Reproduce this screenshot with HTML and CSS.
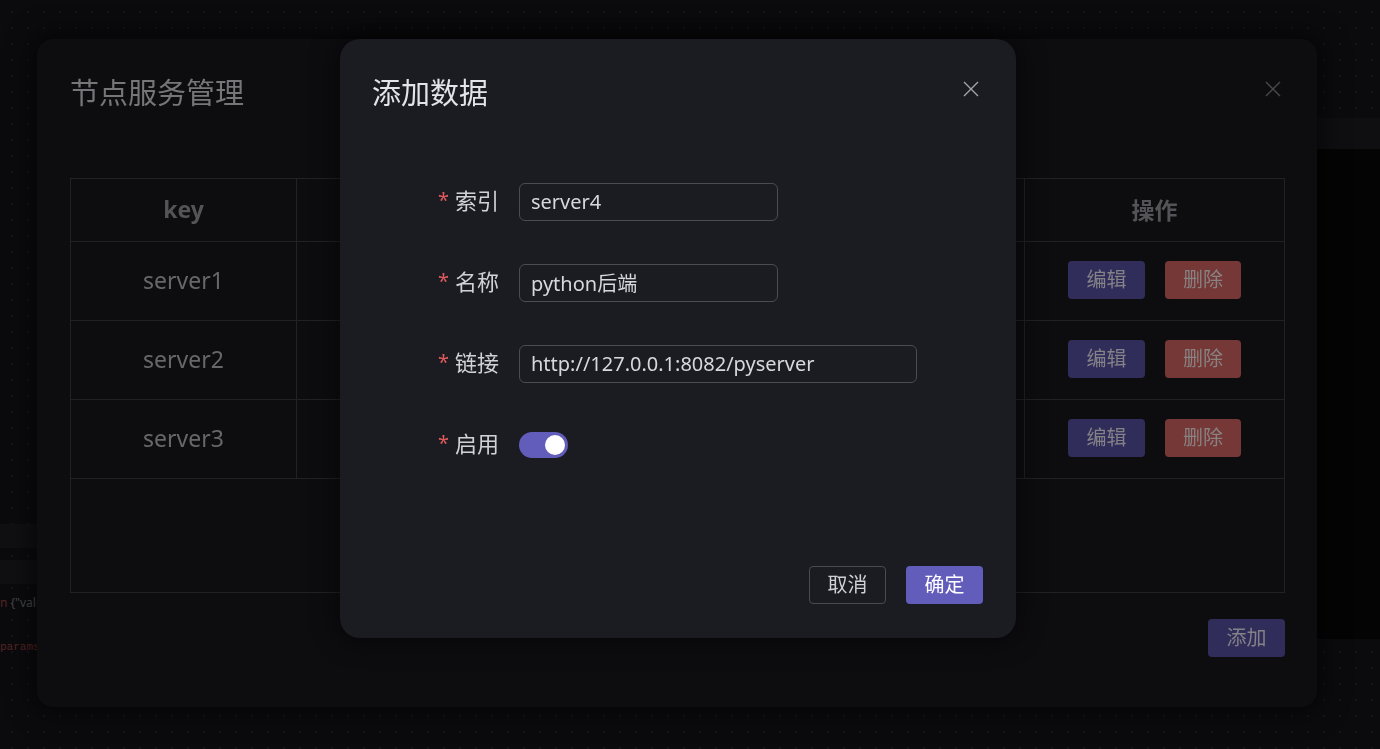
FILE: index.html
```html
<!DOCTYPE html>
<html lang="zh-CN">
<head>
<meta charset="utf-8">
<title>添加数据</title>
<link rel="stylesheet" href="styles.css">
</head>
<body>
<div class="page">
  <div class="page-left">
    <div class="bg-bar"></div>
    <div class="bg-bar"></div>
    <div class="bg-code"><span class="bg-red">n</span> {"value"</div>
    <div class="bg-code bg-mono bg-red">params</div>
  </div>
  <div class="page-right">
    <div class="bg-band"></div>
    <div class="bg-panel"></div>
  </div>
</div>

<div class="layer layer-outer">
  <section class="modal modal-outer">
    <header class="modal-head">
      <h2 class="modal-title">节点服务管理</h2>
      <button class="close close-dim" type="button" aria-label="关闭">
        <svg width="16" height="16" viewBox="0 0 16 16"><path d="M1 1L15 15M15 1L1 15" stroke="currentColor" stroke-width="1.4" fill="none"/></svg>
      </button>
    </header>
    <div class="table-wrap">
      <table class="table">
        <colgroup>
          <col class="c-key"><col class="c-name"><col class="c-url"><col class="c-on"><col>
        </colgroup>
        <thead>
          <tr class="tr-head"><th>key</th><th></th><th></th><th></th><th>操作</th></tr>
        </thead>
        <tbody>
          <tr class="tr-body"><td>server1</td><td></td><td></td><td></td><td><div class="ops"><button class="btn btn-dim-primary" type="button">编辑</button><button class="btn btn-dim-danger" type="button">删除</button></div></td></tr>
          <tr class="tr-body"><td>server2</td><td></td><td></td><td></td><td><div class="ops"><button class="btn btn-dim-primary" type="button">编辑</button><button class="btn btn-dim-danger" type="button">删除</button></div></td></tr>
          <tr class="tr-body"><td>server3</td><td></td><td></td><td></td><td><div class="ops"><button class="btn btn-dim-primary" type="button">编辑</button><button class="btn btn-dim-danger" type="button">删除</button></div></td></tr>
        </tbody>
      </table>
    </div>
    <div class="outer-foot">
      <button class="btn btn-dim-primary" type="button">添加</button>
    </div>
  </section>
</div>

<div class="layer layer-inner">
  <section class="modal modal-inner">
    <header class="modal-head">
      <h2 class="modal-title title-bright">添加数据</h2>
      <button class="close close-bright" type="button" aria-label="关闭">
        <svg width="16" height="16" viewBox="0 0 16 16"><path d="M1 1L15 15M15 1L1 15" stroke="currentColor" stroke-width="1.4" fill="none"/></svg>
      </button>
    </header>
    <form class="form">
      <div class="row">
        <label class="label"><span class="req">*</span>索引</label>
        <input class="input" type="text" value="server4">
      </div>
      <div class="row">
        <label class="label"><span class="req">*</span>名称</label>
        <input class="input" type="text" value="python后端">
      </div>
      <div class="row">
        <label class="label"><span class="req">*</span>链接</label>
        <input class="input input-wide" type="text" value="http://127.0.0.1:8082/pyserver">
      </div>
      <div class="row">
        <label class="label"><span class="req">*</span>启用</label>
        <span class="switch"><span class="knob"></span></span>
      </div>
    </form>
    <footer class="modal-foot">
      <button class="btn btn-ghost" type="button">取消</button>
      <button class="btn btn-primary" type="button">确定</button>
    </footer>
  </section>
</div>
</body>
</html>
```

FILE: styles.css
```css
html, body {
  margin: 0;
  padding: 0;
}

body {
  width: 1380px;
  height: 749px;
  overflow: hidden;
  background-color: #0b0b0e;
  background-image: radial-gradient(circle, #151519 0.8px, transparent 1.2px);
  background-size: 16px 16px;
  background-position: 4px 4px;
  font-family: "Noto Sans", "Noto Sans CJK SC", sans-serif;
}

/* faint page behind the masks */
.page {
  display: flex;
  justify-content: space-between;
  height: 749px;
}

.page-left {
  width: 37px;
  padding-top: 524px;
  box-sizing: border-box;
}

.bg-bar {
  height: 24px;
  background: #101013;
  margin-bottom: 12px;
}

.bg-code {
  font-size: 12px;
  line-height: 14px;
  color: #48484c;
  white-space: nowrap;
  margin-top: 10px;
}

.bg-mono {
  font-family: "Liberation Mono", monospace;
  font-size: 11px;
  margin-top: 30px;
}

.bg-red {
  color: #5a2424;
}

.page-right {
  width: 63px;
  padding-top: 118px;
  box-sizing: border-box;
}

.bg-band {
  height: 31px;
  background: #0f0f12;
}

.bg-panel {
  height: 490px;
  background: #040405;
}

/* modal layers */
.layer {
  position: fixed;
  inset: 0;
  display: flex;
  align-items: flex-start;
}

.layer-outer {
  padding: 39px 0 0 37px;
}

.layer-inner {
  padding: 39px 0 0 340px;
}

.modal {
  box-sizing: border-box;
  display: flex;
  flex-direction: column;
}

.modal-outer {
  width: 1280px;
  height: 668px;
  background: #0d0d10;
  border-radius: 16px;
  padding: 36px 32px 0 33px;
  box-shadow: 0 0 26px 6px rgba(0, 0, 0, 0.55);
}

.modal-inner {
  width: 676px;
  height: 599px;
  background: #1b1c21;
  border-radius: 20px;
  padding: 36px 33px 34px 32px;
  box-shadow: 0 0 24px 6px rgba(0, 0, 0, 0.45);
}

.modal-head {
  display: flex;
  justify-content: space-between;
  align-items: flex-start;
}

.modal-title {
  margin: 0;
  font-size: 29px;
  line-height: 35px;
  font-weight: 400;
  color: #75757a;
}

.title-bright {
  color: #e4e4e8;
}

.close {
  width: 16px;
  height: 16px;
  margin: 6px 4px 0 0;
  padding: 0;
  border: 0;
  background: none;
  display: flex;
}

.close-dim {
  color: #48484c;
}

.close-bright {
  color: #a3a3a8;
}

/* outer table */
.table-wrap {
  margin-top: 68px;
  height: 415px;
  border: 1px solid #222226;
  box-sizing: border-box;
}

.table {
  width: 100%;
  border-collapse: separate;
  border-spacing: 0;
  table-layout: fixed;
}

.c-key { width: 226px; }
.c-name { width: 240px; }
.c-url { width: 300px; }
.c-on { width: 188px; }

.table th,
.table td {
  padding: 0;
  text-align: center;
  border-right: 1px solid #222226;
  border-bottom: 1px solid #222226;
  white-space: nowrap;
}

.table th:last-child,
.table td:last-child {
  border-right: 0;
}

.tr-head {
  height: 63px;
}

.tr-body {
  height: 79px;
}

.table th {
  font-size: 23px;
  font-weight: 700;
  color: #545458;
  padding-bottom: 3px;
}

.table td {
  font-size: 23px;
  color: #67676b;
  padding-bottom: 2px;
}

.ops {
  display: flex;
  justify-content: center;
  gap: 20px;
}

.outer-foot {
  display: flex;
  justify-content: flex-end;
  margin-top: 26px;
}

/* buttons */
.btn {
  height: 38px;
  width: 77px;
  padding: 0;
  border: 0;
  border-radius: 4px;
  font-family: "Noto Sans", "Noto Sans CJK SC", sans-serif;
  font-size: 20px;
  line-height: 36px;
  white-space: nowrap;
  text-align: center;
  box-sizing: border-box;
}

.btn-dim-primary {
  background: #312d5b;
  color: #828287;
}

.btn-dim-danger {
  width: 76px;
  background: #763737;
  color: #888282;
}

.btn-primary {
  background: #625cba;
  color: #ffffff;
}

.btn-ghost {
  width: 77px;
  background: transparent;
  border: 1px solid #4a4b51;
  color: #d0d0d4;
}

/* form */
.form {
  margin-top: 73px;
  display: flex;
  flex-direction: column;
  gap: 43px;
}

.row {
  display: flex;
  align-items: center;
  height: 38px;
}

.label {
  width: 127px;
  text-align: right;
  font-size: 22px;
  line-height: 30px;
  color: #d2d2d6;
  margin-right: 20px;
  padding-bottom: 3px;
}

.req {
  color: #e05a5c;
  font-size: 20px;
  margin-right: 6px;
  position: relative;
  top: -2px;
}

.input {
  width: 259px;
  height: 38px;
  box-sizing: border-box;
  padding: 0 11px 2px;
  background: transparent;
  border: 1px solid #4b4c52;
  border-radius: 6px;
  font-family: "Noto Sans", "Noto Sans CJK SC", sans-serif;
  font-size: 20px;
  color: #d8d8dc;
  outline: none;
}

.input-wide {
  width: 398px;
}

.switch {
  width: 49px;
  height: 26px;
  border-radius: 13px;
  background: #625cba;
  display: flex;
  align-items: center;
  justify-content: flex-end;
  padding: 0 3px;
  box-sizing: border-box;
}

.knob {
  width: 20px;
  height: 20px;
  border-radius: 50%;
  background: #ffffff;
}

.modal-foot {
  margin-top: auto;
  display: flex;
  justify-content: flex-end;
  gap: 20px;
}
```
